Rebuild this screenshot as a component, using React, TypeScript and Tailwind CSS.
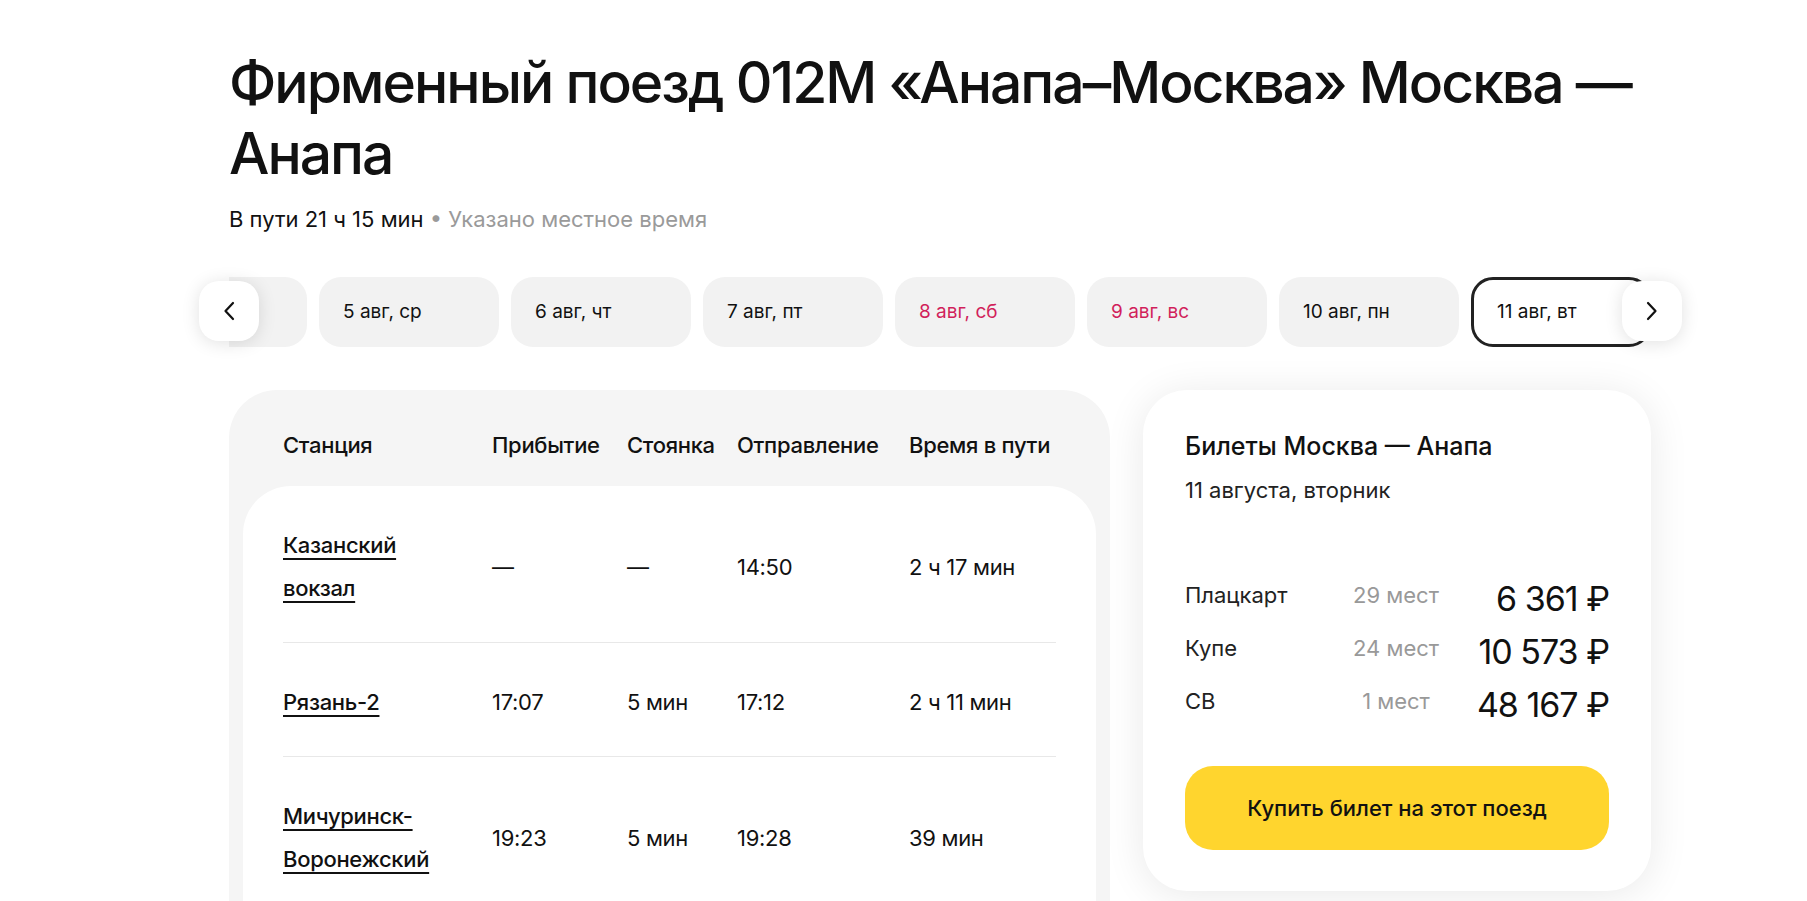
const dates = [
  { label: "", weekend: false },
  { label: "5 авг, ср", weekend: false },
  { label: "6 авг, чт", weekend: false },
  { label: "7 авг, пт", weekend: false },
  { label: "8 авг, сб", weekend: true },
  { label: "9 авг, вс", weekend: true },
  { label: "10 авг, пн", weekend: false },
  { label: "11 авг, вт", weekend: false, active: true },
];

const stops = [
  { station: ["Казанский", "вокзал"], arrival: "—", stop: "—", departure: "14:50", travel: "2 ч 17 мин" },
  { station: ["Рязань-2"], arrival: "17:07", stop: "5 мин", departure: "17:12", travel: "2 ч 11 мин" },
  { station: ["Мичуринск-", "Воронежский"], arrival: "19:23", stop: "5 мин", departure: "19:28", travel: "39 мин" },
];

const fares = [
  { name: "Плацкарт", seats: "29 мест", price: "6 361 ₽" },
  { name: "Купе", seats: "24 мест", price: "10 573 ₽" },
  { name: "СВ", seats: "1 мест", price: "48 167 ₽" },
];

function Chevron({ dir }: { dir: "left" | "right" }) {
  return (
    <svg width="12" height="20" viewBox="0 0 12 20" fill="none">
      <path
        d={dir === "left" ? "M10 2 L2.5 10 L10 18" : "M2 2 L9.5 10 L2 18"}
        stroke="#111"
        strokeWidth="2.2"
        strokeLinecap="round"
        strokeLinejoin="round"
      />
    </svg>
  );
}

function DateStrip() {
  return (
    <div className="relative mt-[43px] h-[72px]">
      <div className="overflow-hidden h-full">
        <div className="flex gap-[12px] -ml-[102px] pt-px">
          {dates.map((d, i) => (
            <div
              key={i}
              className={
                d.active
                  ? "shrink-0 w-[180px] h-[70px] rounded-[22px] border-[3px] border-[#222] bg-white flex items-center pl-[23px] text-[19px] text-[#111]"
                  : "shrink-0 w-[180px] h-[70px] rounded-[22px] bg-[#f2f2f2] flex items-center pl-[24px] text-[19px] " +
                    (d.weekend ? "text-[#d11f5b]" : "text-[#111]")
              }
            >
              {d.label}
            </div>
          ))}
        </div>
      </div>
      {/* arrows */}
      <button className="absolute -left-[30px] top-[5px] w-[60px] h-[60px] rounded-[20px] bg-white shadow-[0_2px_18px_rgba(0,0,0,0.12)] flex items-center justify-center">
        <Chevron dir="left" />
      </button>
      <button className="absolute -right-[30px] top-[5px] w-[60px] h-[60px] rounded-[20px] bg-white shadow-[0_2px_18px_rgba(0,0,0,0.12)] flex items-center justify-center">
        <Chevron dir="right" />
      </button>
    </div>
  );
}

function Schedule() {
  return (
    <div className="w-[881px] shrink-0 rounded-[48px] bg-[#f5f5f5] px-[14px]">
      <div className="grid grid-cols-[209px_135px_110px_172px_1fr] px-[40px] pt-[41px] pb-[27px] text-[22px] leading-[28px] font-medium tracking-[-0.3px] text-[#111]">
        <div>Станция</div>
        <div>Прибытие</div>
        <div>Стоянка</div>
        <div>Отправление</div>
        <div className="whitespace-nowrap">Время в пути</div>
      </div>
      <div className="rounded-[48px] bg-white px-[40px]">
        {stops.map((s) => (
          <div
            key={s.station.join("")}
            className="grid grid-cols-[209px_135px_110px_172px_1fr] items-center pt-[38px] pb-[32px] border-b border-[#e8e8e8] text-[22px] tracking-[-0.3px] text-[#111]"
          >
            <div className="leading-[43px] font-medium">
              {s.station.map((line) => (
                <div key={line}>
                  <span className="underline underline-offset-[5px] decoration-[1.5px]">{line}</span>
                </div>
              ))}
            </div>
            <div>{s.arrival}</div>
            <div>{s.stop}</div>
            <div>{s.departure}</div>
            <div className="whitespace-nowrap">{s.travel}</div>
          </div>
        ))}
        <div className="h-[60px]" />
      </div>
    </div>
  );
}

function Tickets() {
  return (
    <div className="w-[508px] shrink-0 rounded-[44px] bg-white shadow-[0_4px_40px_rgba(0,0,0,0.09)] px-[42px] pt-[40px] pb-[41px]">
      <div className="text-[25px] leading-[32px] font-medium text-[#111]">Билеты Москва — Анапа</div>
      <div className="mt-[14px] text-[22px] leading-[28px] text-[#222]">11 августа, вторник</div>
      <div className="mt-[63px]">
        {fares.map((f) => (
          <div key={f.name} className="grid grid-cols-[150px_122px_1fr] items-center h-[53px]">
            <div className="text-[22px] text-[#222]">{f.name}</div>
            <div className="text-[22px] text-[#999] text-center whitespace-nowrap">{f.seats}</div>
            <div className="text-[34px] tracking-[-1px] text-[#111] text-right pt-[6px] whitespace-nowrap">{f.price}</div>
          </div>
        ))}
      </div>
      <button className="mt-[40px] w-full h-[84px] rounded-[28px] bg-[#ffd52e] text-[22px] font-medium text-[#111]">
        Купить билет на этот поезд
      </button>
    </div>
  );
}

export default function App() {
  return (
    <div className="min-h-screen w-full bg-white font-['Inter',sans-serif] text-[#111]">
      <div className="ml-[229px] w-[1423px] pt-[47px]">
        <h1 className="text-[57px] leading-[71px] font-medium tracking-[-2px] text-[#111]">
          Фирменный поезд 012М «Анапа–Москва» Москва —<br />
          Анапа
        </h1>
        <div className="mt-[16px] text-[22px] leading-[28px]">
          <span className="text-[#111]">В пути 21 ч 15 мин</span>
          <span className="text-[#9a9a9a]"> • Указано местное время</span>
        </div>

        <DateStrip />

        <div className="mt-[42px] flex items-start gap-[33px]">
          <Schedule />
          <Tickets />
        </div>
      </div>
    </div>
  );
}
